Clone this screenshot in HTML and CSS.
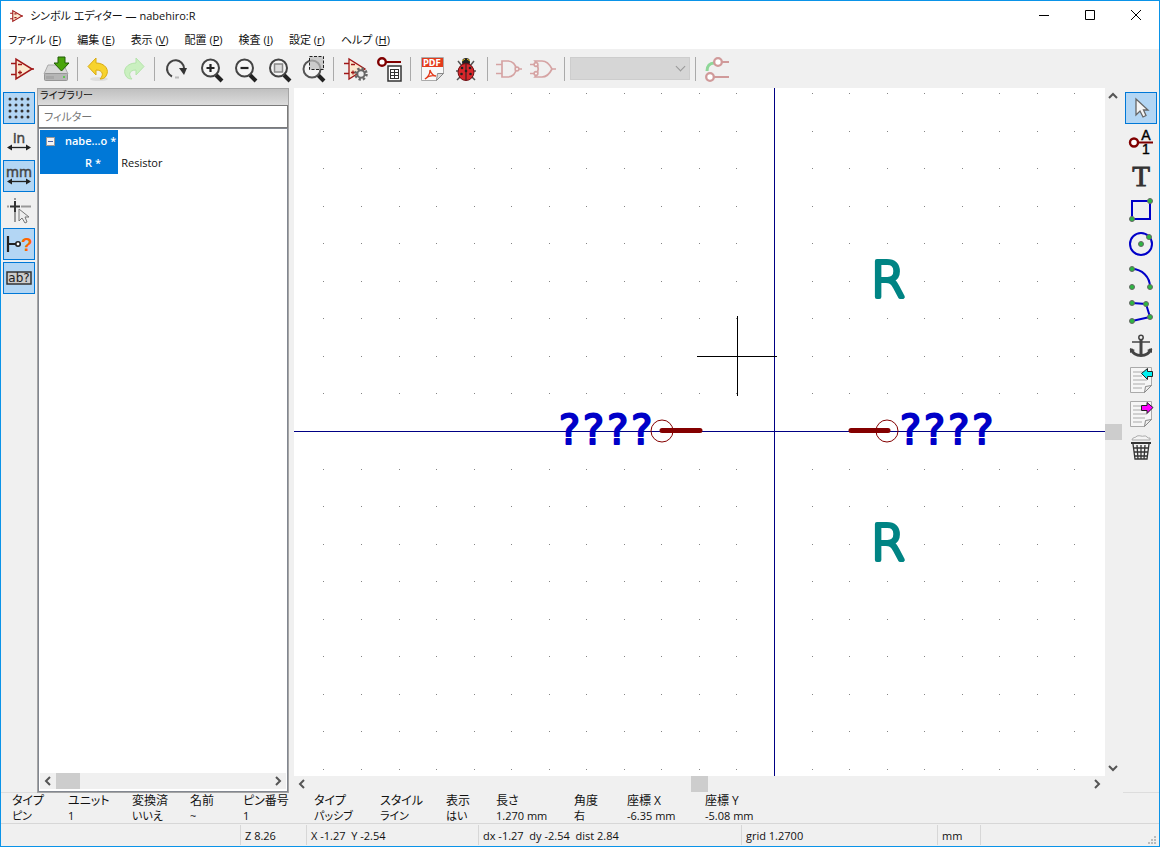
FILE: index.html
```html
<!DOCTYPE html>
<html lang="ja">
<head>
  <meta charset="UTF-8">
  <title>シンボル エディター — nabehiro:R</title>
  <link rel="stylesheet" href="styles.css">
</head>
<body>
  <div class="window">
    <header class="titlebar">
      <svg class="app-icon" viewBox="0 0 26 26"><path d="M2 8h6M2 18h6M23 13h3" stroke="#a01818" stroke-width="2"/><path d="M7 3v20L24 13z" fill="#fbe9cf" stroke="#a01818" stroke-width="2"/><path d="M10 9h4M10 16h4" stroke="#a01818" stroke-width="2"/></svg>
      <h1>シンボル エディター — nabehiro:R</h1>
      <div class="window-buttons">
        <button aria-label="最小化"><svg viewBox="0 0 10 10"><path d="M0 5.500h10"/></svg></button>
        <button aria-label="最大化"><svg viewBox="0 0 10 10"><path d="M.5 .5h9v9h-9z"/></svg></button>
        <button aria-label="閉じる"><svg viewBox="0 0 10 10"><path d="M0 0l10 10M10 0L0 10"/></svg></button>
      </div>
    </header>

    <nav class="menubar">
      <button>ファイル (<u>F</u>)</button>
      <button>編集 (<u>E</u>)</button>
      <button>表示 (<u>V</u>)</button>
      <button>配置 (<u>P</u>)</button>
      <button>検査 (<u>I</u>)</button>
      <button>設定 (<u>r</u>)</button>
      <button>ヘルプ (<u>H</u>)</button>
    </nav>

    <div class="toolbar">
      <button aria-label="新規シンボル"><svg viewBox="0 0 26 26"><path d="M2 7.500h5M2 18.500h5M22 13h3" stroke="#a01818" stroke-width="1.500"/><path d="M7 3v20L23 13z" fill="#fbe9cf" stroke="#a01818" stroke-width="1.500"/><path d="M9 8.500h4M9 16.500h4M11 14.500v4" stroke="#a01818" stroke-width="1.300"/></svg></button>
      <button aria-label="保存"><svg viewBox="0 0 26 26"><path d="M5 9h16l4 9H1z" fill="#d8d8d8" stroke="#aaa"/><rect x="1.500" y="17.500" width="23" height="7" rx="1" fill="#b5b5b5" stroke="#969696"/><path d="M4 20v3M6 20v3M8 20v3M10 20v3" stroke="#999"/><circle cx="21" cy="21" r="1" fill="#4c3"/><path d="M15 1h7v6h4l-7.500 8L11 7h4z" fill="#4aa50c" stroke="#205c04"/></svg></button>
      <hr>
      <button aria-label="元に戻す"><svg viewBox="0 0 26 26"><ellipse cx="13" cy="23" rx="9" ry="2" fill="#dedede"/><path d="M10 2v5c9 0 14 7 10 13-1 2-3 3-6 3 4-4 3-9-4-9v5L2 10.500z" fill="#f7d32e" stroke="#d9ab12"/></svg></button>
      <button aria-label="やり直し"><svg viewBox="0 0 26 26"><path d="M16 2v5C7 7 2 14 6 20c1 2 3 3 6 3-4-4-3-9 4-9v5l8-8.500z" fill="#caf0c0" stroke="#b4e4aa"/></svg></button>
      <hr>
      <button aria-label="再描画"><svg viewBox="0 0 26 26"><path d="M9 20.500A8.500 8.500 0 1 1 21 12" fill="none" stroke="#444" stroke-width="2"/><path d="M16 12h8l-3 7z" fill="#333"/><path d="M12 21.500h4" stroke="#bbb" stroke-width="2"/></svg></button>
      <button aria-label="拡大"><svg viewBox="0 0 26 26"><path d="M19 19l6 6" stroke="#222" stroke-width="4"/><circle cx="13.500" cy="12" r="8.500" fill="#f5f5f5" stroke="#444" stroke-width="2"/><path d="M13.500 8v8M9.500 12h8" stroke="#222" stroke-width="2.200"/></svg></button>
      <button aria-label="縮小"><svg viewBox="0 0 26 26"><path d="M19 19l6 6" stroke="#222" stroke-width="4"/><circle cx="13.500" cy="12" r="8.500" fill="#f5f5f5" stroke="#444" stroke-width="2"/><path d="M9.500 12h8" stroke="#222" stroke-width="2.200"/></svg></button>
      <button aria-label="全体表示"><svg viewBox="0 0 26 26"><path d="M19 19l6 6" stroke="#222" stroke-width="4"/><circle cx="13.500" cy="12" r="8.500" fill="#f5f5f5" stroke="#444" stroke-width="2"/><rect x="9.500" y="8" width="8" height="8" fill="#ddd" stroke="#888" stroke-width="1.500"/></svg></button>
      <button aria-label="選択範囲を拡大"><svg viewBox="0 0 26 26"><path d="M19 19l6 6" stroke="#222" stroke-width="4"/><circle cx="13" cy="13" r="8.500" fill="#f5f5f5" stroke="#555" stroke-width="2"/><rect x="10.500" y=".5" width="14" height="13" fill="#bbb" fill-opacity=".7" stroke="#222" stroke-dasharray="3 1.500"/></svg></button>
      <hr>
      <button aria-label="シンボルのプロパティ"><svg viewBox="0 0 26 26"><path d="M2 7.500h5M2 17.500h5" stroke="#a01818" stroke-width="1.500"/><path d="M7 3v20L23 13z" fill="#fbe9cf" stroke="#a01818" stroke-width="1.300"/><path d="M9 8.500h4M9 16.500h4M11 14.500v4" stroke="#a01818" stroke-width="1.300"/><circle cx="19" cy="18" r="5.500" fill="none" stroke="#666" stroke-width="2.500" stroke-dasharray="2.300 2"/><circle cx="19" cy="18" r="3.700" fill="#eee" stroke="#666" stroke-width="2"/></svg></button>
      <button aria-label="ピンテーブル"><svg viewBox="0 0 26 26"><path d="M9 6h16" stroke="#800000" stroke-width="2"/><circle cx="6" cy="6" r="3.800" fill="#fff" stroke="#800000" stroke-width="2.400"/><rect x="12" y="10" width="13" height="15" fill="#fff" stroke="#333" stroke-width="1.500"/><path d="M14 13.500h9M14 16.500h9M14 19.500h9M14 22.500h9M14.500 13v10M18.500 13v10M22.500 13v10" stroke="#333"/></svg></button>
      <hr>
      <button aria-label="データシート"><svg viewBox="0 0 26 26"><path d="M2.500 1.500h22v16l-7 7h-15z" fill="#f8f8f8" stroke="#aaa"/><path d="M17.500 24.500l1-7 6 0z" fill="#ddd" stroke="#888"/><rect x="3" y="2" width="21" height="9" fill="#e33b1c"/><text class="pdf-label" x="4" y="10">PDF</text><path d="M6 23c3-2 5-6 5-9 1 4 4 6 6 6-4-1-8 0-11 3z" fill="none" stroke="#e33b1c" stroke-width="1.300"/></svg></button>
      <button aria-label="ERC"><svg viewBox="0 0 26 26"><path d="M5 5l4 5M21 5l-4 5M3 15h4M23 15h-4M4 24l5-5M22 24l-5-5" stroke="#555" stroke-width="1.500"/><circle cx="13" cy="6" r="4" fill="#222"/><path d="M9 5l3-2M17 5l-3-2" stroke="#e8c52c"/><ellipse cx="13" cy="16" rx="8" ry="8.500" fill="#d8262b" stroke="#6c0c10"/><path d="M13 8v16" stroke="#222"/><g fill="#222"><circle cx="9" cy="12" r="1.300"/><circle cx="17" cy="12" r="1.300"/><circle cx="8.500" cy="18" r="1.300"/><circle cx="17.500" cy="18" r="1.300"/><circle cx="13" cy="15" r="1.300"/></g></svg></button>
      <hr>
      <button aria-label="標準表示" disabled><svg viewBox="0 0 26 26" fill="none" stroke="#d5a3a3" stroke-width="1.700"><path d="M0 8.500h6M0 17.500h6M22 13h4M6 5h6a8 8 0 0 1 0 16H6z"/><circle cx="21" cy="13" r="1.800" fill="#fff"/></svg></button>
      <button aria-label="代替表示" disabled><svg viewBox="0 0 26 26" fill="none" stroke="#d5a3a3" stroke-width="1.700"><path d="M0 8.500h5M0 17.500h5M21 13h5M5 5h7c5 0 8 4 10 8-2 4-5 8-10 8H5c4-5 4-11 0-16z"/><circle cx="6" cy="8.500" r="1.800" fill="#fff"/><circle cx="6" cy="17.500" r="1.800" fill="#fff"/></svg></button>
      <hr>
      <div class="unit-select"><select aria-label="ユニット" disabled><option></option></select></div>
      <hr>
      <button aria-label="同期ピン編集" disabled><svg viewBox="0 0 26 26" fill="none"><path d="M3 15c0-5 3-8 7-8" stroke="#8fd798" stroke-width="3"/><path d="M17 6h8M9 21h16" stroke="#d09a9a" stroke-width="2"/><circle cx="14" cy="6" r="3.800" fill="#fff" stroke="#d09a9a" stroke-width="2.300"/><circle cx="6" cy="21" r="3.800" fill="#fff" stroke="#d09a9a" stroke-width="2.300"/></svg></button>
    </div>

    <main class="workspace">
      <div class="side-tools left">
        <button class="active" aria-label="グリッド"><svg viewBox="0 0 26 26"><path d="M4 4h19M4 10h19M4 16h19M4 22h19" stroke="#333" stroke-width="3" stroke-linecap="round" stroke-dasharray="0 6"/></svg></button>
        <button aria-label="インチ"><svg viewBox="0 0 26 26"><text class="unit-label" x="13" y="14">in</text><path d="M3 18.500h20" stroke="#222" stroke-width="1.300"/><path d="M1 18.500l5-3v6zM25 18.500l-5-3v6z" fill="#222"/></svg></button>
        <button class="active" aria-label="ミリメートル"><svg viewBox="0 0 26 26"><text class="unit-label" x="13" y="14">mm</text><path d="M3 18.500h20" stroke="#222" stroke-width="1.300"/><path d="M1 18.500l5-3v6zM25 18.500l-5-3v6z" fill="#222"/></svg></button>
        <button aria-label="カーソル形状"><svg viewBox="0 0 26 26"><path d="M1 9.500h2M9 1v2M15 9.500h10M9 15v10" stroke="#999" stroke-width="2"/><path d="M4 9.500h10M9 4v11" stroke="#333" stroke-width="2"/><path d="M13 12v12l3-3 3 5 2-1-2-5h4z" fill="#eee" stroke="#777"/></svg></button>
        <button class="active" aria-label="ピンの電気的タイプ"><svg viewBox="0 0 26 26"><path d="M2 5v16M2 13h8" stroke="#222" stroke-width="2.200"/><circle cx="12" cy="13" r="2.200" fill="#fff" stroke="#222" stroke-width="1.600"/><text class="question" x="15" y="20">?</text></svg></button>
        <button class="active" aria-label="テキスト表示"><svg viewBox="0 0 26 26"><rect x="1" y="7" width="24" height="12" fill="#ccc" stroke="#333" stroke-width="1.500"/><text class="ab-label" x="13" y="17">ab?</text></svg></button>
      </div>

      <section class="library">
        <h2>ライブラリー</h2>
        <input type="text" placeholder="フィルター" aria-label="フィルター">
        <div class="tree">
          <table>
            <tr><th><button class="toggle" aria-label="折りたたむ"></button>nabe...o *</th><td></td></tr>
            <tr><th class="child">R *</th><td>Resistor</td></tr>
          </table>
          <div class="scroll horizontal">
            <button aria-label="左へ"><svg viewBox="0 0 10 10"><path d="M7 1L3 5l4 4"/></svg></button>
            <div class="track"><div class="thumb"></div></div>
            <button aria-label="右へ"><svg viewBox="0 0 10 10"><path d="M3 1l4 4-4 4"/></svg></button>
          </div>
        </div>
      </section>

      <section class="editor">
        <svg class="sheet" id="sheet">
          <g id="grid"></g>
          <g class="axis">
            <path d="M480.500 0v4000M0 343.500h4000"/>
          </g>
          <g class="pins">
            <path d="M368 342.500h38M557 342.500h37"/>
            <circle cx="368" cy="343" r="11"/>
            <circle cx="593" cy="343" r="11"/>
          </g>
          <text class="pin-name" x="263" y="356">????</text>
          <text class="pin-name" x="604" y="356">????</text>
          <text class="field" x="594" y="209">R</text>
          <text class="field" x="594" y="472">R</text>
          <path class="cross" d="M403 268.500h80M443.500 228v80"/>
        </svg>
        <div class="scroll vertical">
          <button aria-label="上へ"><svg viewBox="0 0 10 10"><path d="M1 7l4-4 4 4"/></svg></button>
          <div class="track"><div class="thumb"></div></div>
          <button aria-label="下へ"><svg viewBox="0 0 10 10"><path d="M1 3l4 4 4-4"/></svg></button>
        </div>
        <div class="scroll horizontal">
          <button aria-label="左へ"><svg viewBox="0 0 10 10"><path d="M7 1L3 5l4 4"/></svg></button>
          <div class="track"><div class="thumb"></div></div>
          <button aria-label="右へ"><svg viewBox="0 0 10 10"><path d="M3 1l4 4-4 4"/></svg></button>
        </div>
      </section>

      <div class="side-tools right">
        <button class="active" aria-label="選択"><svg viewBox="0 0 26 26"><path d="M8 4v16l4-4 3 6 3-1.500-2.500-5.500H20z" fill="#f5f5f5" stroke="#666" stroke-width="1.300"/></svg></button>
        <button aria-label="ピンを追加"><svg viewBox="0 0 26 26"><path d="M10 13.500h15" stroke="#800000" stroke-width="2"/><circle cx="6" cy="13.500" r="4" fill="#fff" stroke="#800000" stroke-width="2.400"/><text class="pin-label" x="18" y="11">A</text><text class="pin-label" x="18" y="25">1</text></svg></button>
        <button aria-label="テキストを追加"><svg viewBox="0 0 26 26"><text class="text-label" x="13" y="23">T</text></svg></button>
        <button aria-label="矩形を追加"><svg viewBox="0 0 26 26"><path d="M4 4h18v18H4z" fill="none" stroke="#0000c8" stroke-width="2"/><g class="node"><circle cx="22" cy="4" r="2.500"/><circle cx="4" cy="22" r="2.500"/></g></svg></button>
        <button aria-label="円を追加"><svg viewBox="0 0 26 26"><circle cx="13" cy="13" r="11" fill="none" stroke="#0000c8" stroke-width="2"/><g class="node"><circle cx="13" cy="13" r="2.500"/><circle cx="21" cy="6" r="2.500"/></g></svg></button>
        <button aria-label="円弧を追加"><svg viewBox="0 0 26 26"><path d="M4 4c10 0 18 8 18 18" fill="none" stroke="#0000c8" stroke-width="2"/><g class="node"><circle cx="4" cy="4" r="2.500"/><circle cx="4" cy="22" r="2.500"/><circle cx="22" cy="22" r="2.500"/></g></svg></button>
        <button aria-label="線を追加"><svg viewBox="0 0 26 26"><path d="M4 4l14 1 4 13-18 4" fill="none" stroke="#0000c8" stroke-width="2"/><g class="node"><circle cx="4" cy="4" r="2.500"/><circle cx="18" cy="5" r="2.500"/><circle cx="22" cy="18" r="2.500"/><circle cx="4" cy="22" r="2.500"/></g></svg></button>
        <button aria-label="アンカー"><svg viewBox="0 0 26 26" fill="none" stroke="#444"><circle cx="13" cy="4.500" r="2.200" stroke-width="1.500"/><path d="M13 7v15" stroke-width="3"/><path d="M4 9h18" stroke-width="1.500"/><path d="M3 16c2 5 6 6.500 10 6.500S21 21 23 16" stroke-width="3"/><path d="M2 20v-5l5 2zM24 20v-5l-5 2z" fill="#444" stroke="none"/></svg></button>
        <button aria-label="インポート"><svg viewBox="0 0 26 26"><path d="M2.500 .5h21v18l-7 7h-14z" fill="#f6f6f6" stroke="#aaa"/><path d="M16.500 25.500l1-6 6-1z" fill="#eee" stroke="#888"/><path d="M5 5h13M5 9h9M5 13h14M5 17h12M5 21h9" stroke="#aaa"/><path d="M13.500 6.500l6-5v3h5v5h-5v3z" fill="#00f0f0" stroke="#222"/></svg></button>
        <button aria-label="エクスポート"><svg viewBox="0 0 26 26"><path d="M2.500 .5h21v18l-7 7h-14z" fill="#f6f6f6" stroke="#aaa"/><path d="M16.500 25.500l1-6 6-1z" fill="#eee" stroke="#888"/><path d="M5 5h8M5 9h8M5 13h14M5 17h12M5 21h9" stroke="#aaa"/><path d="M25 6.500l-6-5v3h-5.500v5H19v3z" fill="#f0f" stroke="#222"/></svg></button>
        <button aria-label="削除"><svg viewBox="0 0 26 26"><path d="M4 5c0-3 4-2 5-4 3-1 5 1 7 0 3-1 3 3 6 2v2z" fill="#f4f4f4" stroke="#aaa"/><path d="M3 8h20" stroke="#333" stroke-width="2"/><path d="M5 9l2 15h12l2-15M9 10l1 14M13 10v14M17 10l-1 14M5 13h16M6 17h14M6 21h14" fill="none" stroke="#333" stroke-width="1.300"/></svg></button>
      </div>
    </main>

    <dl class="info">
      <div><dt>タイプ</dt><dd>ピン</dd></div>
      <div><dt>ユニット</dt><dd>1</dd></div>
      <div><dt>変換済</dt><dd>いいえ</dd></div>
      <div><dt>名前</dt><dd>~</dd></div>
      <div><dt>ピン番号</dt><dd>1</dd></div>
      <div><dt>タイプ</dt><dd>パッシブ</dd></div>
      <div><dt>スタイル</dt><dd>ライン</dd></div>
      <div><dt>表示</dt><dd>はい</dd></div>
      <div><dt>長さ</dt><dd>1.270 mm</dd></div>
      <div><dt>角度</dt><dd>右</dd></div>
      <div><dt>座標 X</dt><dd>-6.35 mm</dd></div>
      <div><dt>座標 Y</dt><dd>-5.08 mm</dd></div>
    </dl>

    <footer class="statusbar">
      <span></span>
      <span>Z 8.26</span>
      <span>X -1.27&nbsp; Y -2.54</span>
      <span>dx -1.27&nbsp; dy -2.54&nbsp; dist 2.84</span>
      <span>grid 1.2700</span>
      <span>mm</span>
      <span></span>
      <svg class="grip" viewBox="0 0 10 10"><path d="M7 0h2v2H7zM4 3h2v2H4zM7 3h2v2H7zM1 6h2v2H1zM4 6h2v2H4zM7 6h2v2H7z"/></svg>
    </footer>
  </div>

  <script src="grid.js"></script>
</body>
</html>
```
FILE: styles.css
```css
* {
  box-sizing: border-box;
}

body {
  margin: 0;
  font-family: "Open Sans", "Noto Sans CJK JP", sans-serif;
  font-size: 11px;
  line-height: 16px;
  font-feature-settings: "palt";
  color: #111;
}

button {
  font: inherit;
  font-feature-settings: inherit;
  color: inherit;
  background: none;
  border: 0;
  padding: 0;
}

.window {
  display: flex;
  flex-direction: column;
  min-height: 100vh;
  border: 1px solid #0a93e8;
  background: #f0f0f0;
}

/* title and menu */
.titlebar {
  display: flex;
  align-items: center;
  height: 30px;
  padding-left: 8px;
  background: #fff;
}

.app-icon {
  width: 14px;
  height: 14px;
}

.titlebar h1 {
  flex: 1;
  margin: 0 0 0 7px;
  font-size: 11px;
  font-weight: 400;
}

.window-buttons {
  display: flex;
}

.window-buttons button {
  width: 46px;
  height: 28px;
}

.window-buttons svg {
  width: 10px;
  height: 10px;
  fill: none;
  stroke: #000;
}

.menubar {
  display: flex;
  gap: 16px;
  height: 18px;
  padding-left: 7px;
  line-height: 18px;
  background: #fff;
}

/* toolbars */
.toolbar {
  display: flex;
  align-items: center;
  height: 39px;
  padding-left: 4px;
}

.toolbar button {
  width: 34px;
  height: 34px;
}

.toolbar svg,
.side-tools svg {
  display: block;
  width: 26px;
  height: 26px;
  margin: auto;
  overflow: visible;
}

.toolbar hr {
  width: 1px;
  height: 24px;
  margin: 0 4px;
  border: 0;
  background: #aaa;
}

.unit-select {
  position: relative;
  width: 120px;
  margin: 0 1px;
}

.unit-select select {
  display: block;
  appearance: none;
  width: 100%;
  height: 23px;
  border: 1px solid #bfbfbf;
  background: #ccc;
}

.unit-select::after {
  content: "";
  position: absolute;
  right: 6px;
  top: 6px;
  width: 6px;
  height: 6px;
  border: solid #999;
  border-width: 0 1px 1px 0;
  transform: rotate(45deg);
}

.workspace {
  flex: 1;
  display: flex;
}

.side-tools {
  display: flex;
  flex-direction: column;
  gap: 2px;
  padding: 4px 2px;
  border-bottom: 1px solid #ddd;
}

.side-tools button {
  width: 32px;
  height: 32px;
  border: 1px solid transparent;
}

.side-tools .active {
  background: #b3d6f4;
  border-color: #0078d7;
}

.node {
  fill: #2db742;
  stroke: #666;
}

.pdf-label {
  font: bold 8px "DejaVu Sans", sans-serif;
  fill: #fff;
}

.unit-label {
  font: 14px/14px "Open Sans", sans-serif;
  text-anchor: middle;
  fill: #444;
  stroke: #444;
  stroke-width: .5px;
}

.question {
  font: bold 19px "Liberation Sans", sans-serif;
  fill: #f60;
}

.ab-label {
  font: 12px "DejaVu Sans", sans-serif;
  text-anchor: middle;
  fill: #222;
}

.pin-label {
  font: 14px/14px "Liberation Sans", sans-serif;
  text-anchor: middle;
  stroke: #000;
  stroke-width: .4px;
}

.text-label {
  font: 29px/26px "Liberation Serif", serif;
  text-anchor: middle;
  fill: #333;
  stroke: #333;
}

/* library pane */
.library {
  display: flex;
  flex-direction: column;
  width: 252px;
  margin-right: 5px;
  border: 1px solid #a5a5a5;
}

.library h2 {
  margin: 0;
  padding-left: 2px;
  height: 16px;
  font-size: 10px;
  font-weight: 400;
  line-height: 12px;
  background: linear-gradient(#c0c0c0, #dcdcdc);
}

.library input {
  height: 23px;
  border: 1px solid #7a7a7a;
  padding: 0 5px;
  font: inherit;
  font-feature-settings: inherit;
}

.library input::placeholder {
  color: #757575;
}

.tree {
  flex: 1;
  display: flex;
  flex-direction: column;
  justify-content: space-between;
  border: 1px solid #828790;
  padding: 1px 1px 2px;
  background: #fff;
}

.tree table {
  border-collapse: collapse;
}

.tree tr {
  height: 22px;
}

.tree th {
  width: 78px;
  padding: 0 2px 0 6px;
  text-align: left;
  font-weight: 600;
  color: #fff;
  background: #0078d7;
  white-space: nowrap;
}

.tree .child {
  padding-left: 45px;
}

.tree td {
  padding: 0 3px;
}

.toggle {
  width: 9px;
  height: 9px;
  margin-right: 10px;
  border: 1px solid #999;
  background: linear-gradient(#4b63a7, #4b63a7) center / 5px 1px no-repeat #f4f4f4;
}

/* scroll bars */
.scroll {
  display: flex;
  background: #f0f0f0;
}

.scroll button {
  width: 16px;
  height: 16px;
}

.scroll svg {
  display: block;
  width: 10px;
  height: 10px;
  margin: auto;
  fill: none;
  stroke: #555;
  stroke-width: 2;
}

.track {
  flex: 1;
  display: flex;
  justify-content: center;
}

.thumb {
  width: 17px;
  height: 16px;
  background: #cdcdcd;
}

.vertical,
.vertical .track {
  flex-direction: column;
}

.tree .track {
  justify-content: flex-start;
}

.tree .thumb {
  width: 24px;
}

/* drawing sheet */
.editor {
  flex: 1;
  display: grid;
  grid-template-columns: 1fr 17px;
  grid-template-rows: 1fr 17px;
  min-width: 0;
}

.sheet {
  width: 100%;
  height: 100%;
  background: #fff;
}

#grid {
  fill: #848484;
}

.axis {
  stroke: #000084;
}

.cross {
  stroke: #000;
}

.pins {
  fill: none;
  stroke: #840000;
}

.pins path {
  stroke-width: 5;
  stroke-linecap: round;
}

.pin-name {
  font: 40px "DejaVu Sans Mono", monospace;
  fill: #0000c8;
  stroke: #0000c8;
  stroke-width: 2px;
  stroke-linejoin: round;
}

.field {
  font: 200 50px "DejaVu Sans", sans-serif;
  text-anchor: middle;
  fill: #008484;
  stroke: #008484;
  stroke-width: 4px;
  stroke-linejoin: round;
}

.right {
  margin-left: 1px;
}

/* message panel and status bar */
.info {
  display: grid;
  grid-template-columns: 56px 64px 58px 53px 71px 66px 66px 50px 78px 53px 78px 1fr;
  height: 31px;
  margin: 0;
  padding-left: 11px;
  border-bottom: 1px solid #d7d7d7;
  line-height: 15px;
  white-space: nowrap;
}

.info dt {
  font-size: 12px;
}

.info dd {
  margin: 0;
}

.statusbar {
  display: grid;
  grid-template-columns: 239px 66px 172px 263px 196px 43px 1fr 12px;
  height: 22px;
  line-height: 22px;
  white-space: nowrap;
}

.statusbar span {
  height: 20px;
  margin-top: 1px;
  padding-left: 4px;
}

.statusbar span + span {
  border-left: 1px solid #d7d7d7;
}

.grip {
  width: 10px;
  height: 10px;
  align-self: end;
  fill: #bbb;
}
```
FILE: grid.js
```js
// grid dots around the origin of the sheet
const sheet = document.getElementById("sheet");
const step = 37.55;
const originX = 480;
const originY = 343;

function drawGrid() {
  const width = sheet.clientWidth;
  const height = sheet.clientHeight;
  let dots = "";

  for (let i = -Math.floor(originX / step); originX + i * step < width; i++) {
    for (let j = -Math.floor(originY / step); originY + j * step < height; j++) {
      const x = Math.round(originX + i * step);
      const y = Math.round(originY + j * step);
      dots += `<rect x="${x}" y="${y}" width="1" height="1"/>`;
    }
  }
  document.getElementById("grid").innerHTML = dots;
}

drawGrid();
window.addEventListener("resize", drawGrid);
```
